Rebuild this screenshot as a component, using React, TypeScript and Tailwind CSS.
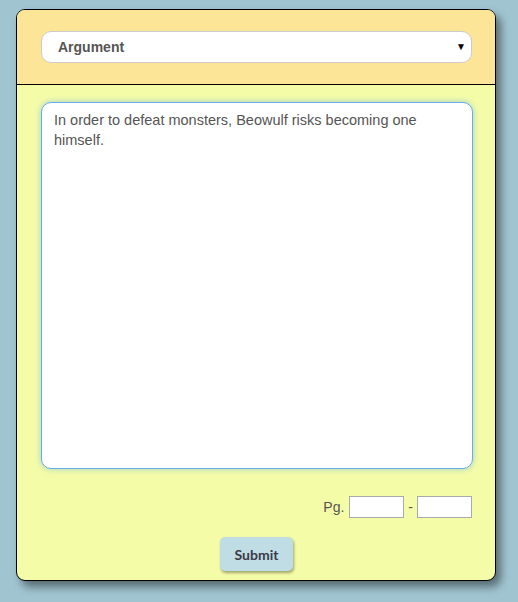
import { useState } from "react";

export default function App() {
  const [text, setText] = useState(
    "In order to defeat monsters, Beowulf risks becoming one himself."
  );

  return (
    <div className="min-h-[602px] w-full bg-[#a0c5d1] pt-[9px] pl-[16px] font-['Liberation_Sans',Arial,sans-serif]">
      <div className="w-[480px] overflow-hidden rounded-[9px] border border-black bg-[#f5fca8] shadow-[5px_6px_8px_rgba(0,0,0,0.45)]">
        <div className="border-b border-black bg-[#fde597] px-6 pt-[21px] pb-[21px]">
          <div className="relative">
            <select className="h-[32px] w-[431px] appearance-none rounded-[10px] border border-[#cccccc] bg-white pl-4 text-[14px] font-bold text-[#555555] outline-none">
              <option>Argument</option>
            </select>
            <span className="pointer-events-none absolute top-[8px] right-[5px] text-[10px] text-black">
              ▼
            </span>
          </div>
        </div>

        <div className="flex flex-col pt-[17px] pr-[23px] pb-[9px] pl-6">
          <textarea
            value={text}
            onChange={(e) => setText(e.target.value)}
            className="h-[367px] w-[432px] resize-none rounded-[10px] border border-[#66afe9] bg-white px-3 py-[7px] text-[14.5px] leading-[20px] text-[#555555] shadow-[0_0_6px_rgba(102,175,233,0.6)] outline-none"
          />

          <div className="mt-[27px] flex items-center justify-end gap-[5px] text-[14px] text-[#555555]">
            <span>Pg.</span>
            <input className="h-[22px] w-[55px] border border-[#aaaaaa] bg-white" />
            <span className="mx-[-1px]">-</span>
            <input className="h-[22px] w-[55px] border border-[#aaaaaa] bg-white" />
          </div>

          <div className="mt-[19px] flex justify-center">
            <button className="h-[34px] w-[73px] rounded-[5px] bg-[#c0dce4] font-['Lato',sans-serif] text-[14px] font-bold text-[#3a3a4a] shadow-[1px_2px_3px_rgba(0,0,0,0.35)]">
              Submit
            </button>
          </div>
        </div>
      </div>
    </div>
  );
}
